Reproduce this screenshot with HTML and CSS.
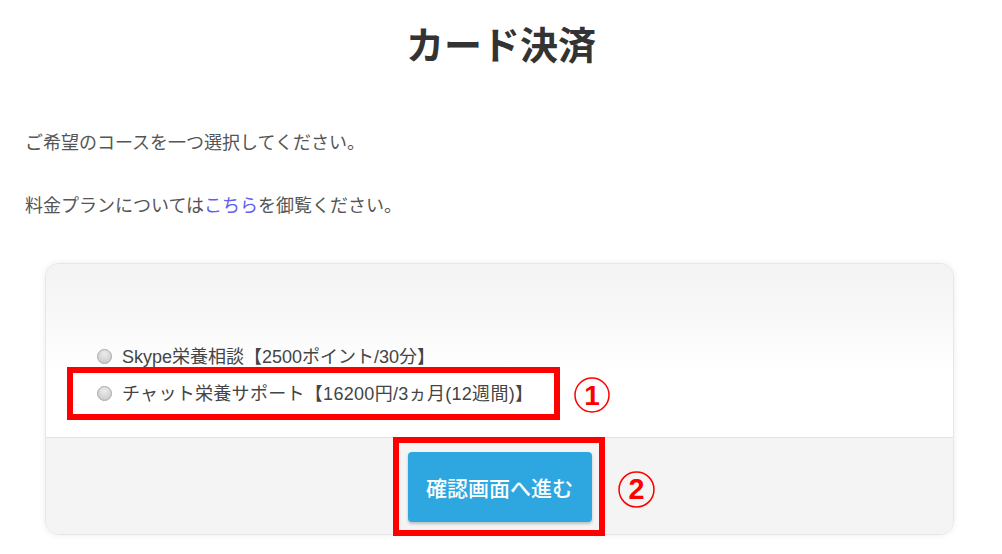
FILE: index.html
```html
<!DOCTYPE html>
<html lang="ja">
<head>
<meta charset="utf-8">
<title>カード決済</title>
<link rel="stylesheet" href="styles.css">
</head>
<body>
<main class="page">
  <h1 class="title">カード決済</h1>
  <p class="lead">ご希望のコースを一つ選択してください。</p>
  <p class="lead">料金プランについては<a class="link" href="#">こちら</a>を御覧ください。</p>
  <form class="card">
    <div class="card-body">
      <ul class="plans">
        <li class="plan"><span class="radio"></span><span class="plan-text">Skype栄養相談【2500ポイント/30分】</span></li>
        <li class="plan"><span class="radio"></span><span class="plan-text">チャット栄養サポート【16200円/3ヵ月(12週間)】</span></li>
      </ul>
    </div>
    <div class="card-footer">
      <button type="button" class="btn">確認画面へ進む</button>
    </div>
  </form>
</main>
<div class="mark mark-box mark-box-1"></div>
<div class="mark mark-box mark-box-2"></div>
<svg class="mark mark-num mark-num-1" viewBox="0 0 36 36" width="36" height="36"><circle cx="18" cy="18" r="17" fill="none" stroke="#f00" stroke-width="1.5"/><text x="18" y="27.5" text-anchor="middle" class="num-text">1</text></svg>
<svg class="mark mark-num mark-num-2" viewBox="0 0 36 36" width="37" height="37"><circle cx="18" cy="18" r="17" fill="none" stroke="#f00" stroke-width="1.5"/><text x="18" y="27.5" text-anchor="middle" class="num-text">2</text></svg>
</body>
</html>
```
FILE: styles.css
```css
html, body {
  margin: 0;
  padding: 0;
  background: #fff;
}
body {
  position: relative;
  width: 1002px;
  height: 554px;
  overflow: hidden;
  font-family: "Liberation Sans", "Noto Sans CJK JP", sans-serif;
  color: #555;
}
.page {
  padding: 20px 0 0 25px;
  box-sizing: border-box;
}
.title {
  margin: 0;
  font-family: "Noto Sans CJK JP", sans-serif;
  font-size: 38px;
  line-height: 46px;
  font-weight: 700;
  color: #333;
  text-align: center;
  padding-right: 25px;
}
.lead {
  margin: 65px 0 0;
  font-size: 18px;
  line-height: 24px;
  color: #555;
}
.lead + .lead {
  margin-top: 39px;
}
.link {
  color: #5e60f0;
  text-decoration: none;
}
.card {
  margin: 45px 0 0 20px;
  width: 909px;
  box-sizing: border-box;
  border: 1px solid #e6e6e6;
  border-radius: 14px;
  box-shadow: 0 0 6px rgba(0, 0, 0, 0.08);
  overflow: hidden;
  background: #fff;
}
.card-body {
  padding: 78px 0 32px 51px;
  background: linear-gradient(to bottom, #f3f3f3 0%, #f9f9f9 35%, #fff 62%);
}
.plans {
  list-style: none;
  margin: 0;
  padding: 0;
  display: flex;
  flex-direction: column;
  gap: 11px;
}
.plan {
  display: flex;
  align-items: center;
  height: 26px;
  font-size: 18px;
  color: #444;
}
.plan + .plan .plan-text {
  letter-spacing: 0.3px;
}
.radio {
  width: 15px;
  height: 15px;
  border-radius: 50%;
  box-sizing: border-box;
  border: 1px solid #a8a8a8;
  background: radial-gradient(circle at 50% 30%, #ececec 0%, #d2d2d2 65%, #c0c0c0 100%);
  margin: 3px 10px 0 0;
  flex: none;
}
.card-footer {
  border-top: 1px solid #e3e3e3;
  background: #f4f4f4;
  padding: 14px 0 12px;
  display: flex;
  justify-content: center;
}
.btn {
  width: 184px;
  height: 70px;
  border: 0;
  border-radius: 4px;
  background: #2ea7e0;
  color: #fff;
  font-family: "Noto Sans CJK JP", sans-serif;
  font-size: 21px;
  font-weight: 500;
  box-shadow: 0 2px 3px rgba(0, 0, 0, 0.22);
  cursor: pointer;
}
.mark {
  position: absolute;
}
.mark-box {
  box-sizing: border-box;
  border: 6px solid #f00;
}
.mark-box-1 {
  left: 67px;
  top: 367px;
  width: 493px;
  height: 53px;
}
.mark-box-2 {
  left: 393px;
  top: 437px;
  width: 212px;
  height: 99px;
}
.mark-num-1 {
  left: 574px;
  top: 377px;
}
.mark-num-2 {
  left: 618px;
  top: 471px;
}
.num-text {
  font-family: "Liberation Sans", sans-serif;
  font-weight: 700;
  font-size: 28px;
  fill: #f00;
}
```
